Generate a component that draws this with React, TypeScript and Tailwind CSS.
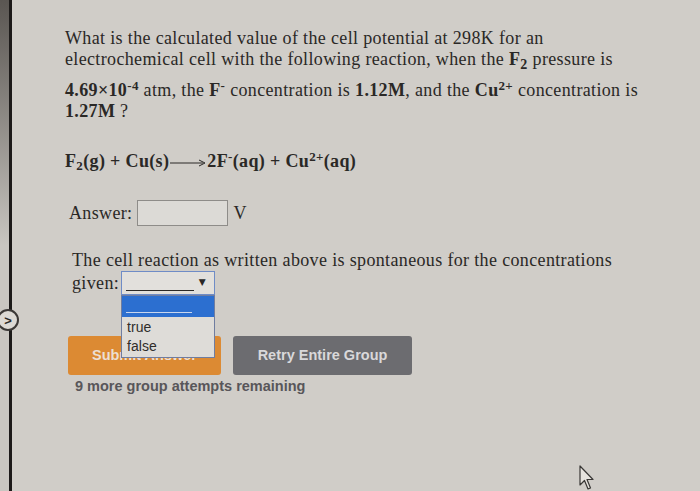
import React from 'react';

const serif = { fontFamily: '"Liberation Serif", "Times New Roman", serif' };
const sans = { fontFamily: '"Liberation Sans", Arial, sans-serif' };

function Arrow() {
  // long reaction arrow
  return (
    <svg width="36" height="10" viewBox="0 0 36 10" className="inline-block align-middle mx-[1px]">
      <line x1="0" y1="5" x2="33" y2="5" stroke="#2a2826" strokeWidth="1" />
      <path d="M29 2 L35 5 L29 8" fill="none" stroke="#2a2826" strokeWidth="1" />
    </svg>
  );
}

function Cursor() {
  return (
    <svg width="16" height="26" viewBox="0 0 16 26">
      <path d="M1 1 L1 20 L5.5 15.5 L9 24 L11.5 23 L8 14.5 L14 14.5 Z" fill="#e6e3de" stroke="#3a3836" strokeWidth="1.2" strokeLinejoin="round" />
    </svg>
  );
}

export default function App() {
  return (
    <div className="relative w-full h-[491px] overflow-hidden bg-[#d0cdc8] text-[#2a2826] flex">
      {/* left edge of the screen */}
      <div className="w-[9px] h-full bg-linear-to-b from-[#5a5652] via-[#c9c6c1] to-[#c9c6c1]" />
      <div className="w-[3px] h-full bg-[#1c1a19]" />
      <div className="absolute left-[-3px] top-[309px] w-[22px] h-[22px] rounded-full border-2 border-[#3b3836] bg-[#dcd9d4] flex items-center justify-center">
        <span className="text-[13px] font-bold leading-none text-[#2a2826]" style={sans}>&gt;</span>
      </div>

      <div className="pl-[53px] pt-[28px] text-[18px] tracking-[0.35px]" style={serif}>
        <div className="leading-[21px] whitespace-nowrap">What is the calculated value of the cell potential at 298K for an</div>
        <div className="leading-[21px] whitespace-nowrap">
          electrochemical cell with the following reaction, when the <b>F<sub className="text-[14px]">2</sub></b> pressure is
        </div>
        <div className="leading-[21px] mt-[10px] whitespace-nowrap">
          <b>4.69×10<sup className="text-[13px]">-4</sup></b> atm, the <b>F<sup className="text-[13px]">-</sup></b> concentration is <b>1.12M</b>, and the <b>Cu<sup className="text-[13px]">2+</sup></b> concentration is
        </div>
        <div className="leading-[21px] whitespace-nowrap">
          <b>1.27M</b> ?
        </div>

        <div className="leading-[21px] mt-[29px] whitespace-nowrap font-bold">
          F<sub className="text-[13px]">2</sub>(g) + Cu(s)<Arrow />2F<sup className="text-[13px]">-</sup>(aq) + Cu<sup className="text-[13px]">2+</sup>(aq)
        </div>

        <div className="mt-[28px] flex items-center h-[26px]">
          <span className="pl-[4px]">Answer:</span>
          <div className="ml-[5px] w-[91px] h-[26px] border border-[#8e8c89] bg-[#dcdad6]" />
          <span className="ml-[5px]">V</span>
        </div>

        <div className="mt-[24px] leading-[21px] pl-[7px] whitespace-nowrap">
          The cell reaction as written above is spontaneous for the concentrations
        </div>
        <div className="flex items-center h-[24px] pl-[7px]">
          <span>given:</span>
          <div className="relative ml-[2px] w-[94px] h-[24px] border border-[#6f8cc6] bg-[#e2e0dc]">
            <div className="absolute left-[4px] bottom-[3px] w-[68px] h-[1px] bg-[#2a2826]" />
            <div className="absolute right-[8px] top-[6px] text-[9px] leading-none" style={{ fontFamily: '"DejaVu Sans", sans-serif' }}>▼</div>
            {/* open list */}
            <div className="absolute left-[-1px] top-[23px] w-[94px] h-[63px] border border-[#6f7da0] bg-[#dedcd8] z-10 tracking-normal" style={sans}>
              <div className="relative h-[21px] bg-[#2c6fd0]">
                <div className="absolute left-[4px] bottom-[4px] w-[66px] h-[1px] bg-[#c9d6ee]" />
              </div>
              <div className="pl-[5px] text-[14px] leading-[19px] mt-[1px] text-[#2f2d2b]">true</div>
              <div className="pl-[5px] text-[14px] leading-[19px] text-[#2f2d2b]">false</div>
            </div>
          </div>
        </div>

        <div className="mt-[41px] flex gap-[12px] ml-[3px] tracking-normal" style={sans}>
          <div className="w-[153px] h-[39px] rounded-[3px] bg-[#dc8a33] flex items-center justify-center text-[14.5px] font-bold text-[#ecdfd2]">
            Submit Answer
          </div>
          <div className="w-[179px] h-[39px] rounded-[3px] bg-[#6c6c70] flex items-center justify-center text-[14.5px] font-bold text-[#d9d8da]">
            Retry Entire Group
          </div>
        </div>
        <div className="mt-[2px] pl-[10px] text-[14.5px] leading-[18px] font-bold text-[#58565a] tracking-normal" style={sans}>
          9 more group attempts remaining
        </div>
      </div>

      <div className="absolute left-[579px] top-[465px]">
        <Cursor />
      </div>
    </div>
  );
}
